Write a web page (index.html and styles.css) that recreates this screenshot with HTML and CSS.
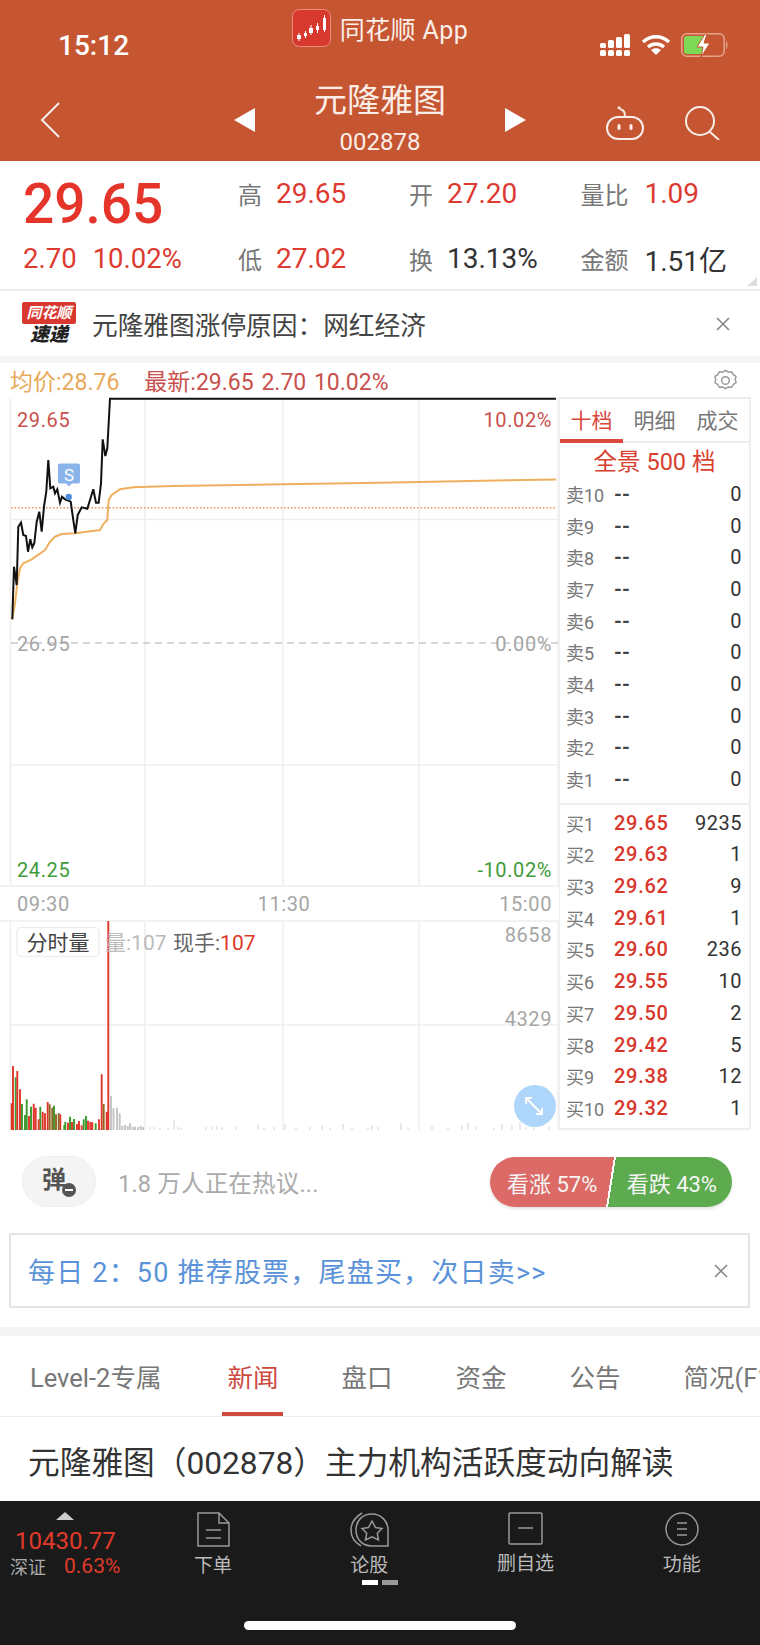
FILE: index.html
```html
<!DOCTYPE html>
<html lang="zh-CN">

<head>
    <meta charset="UTF-8">
    <meta name="viewport" content="width=device-width, initial-scale=1.0">
    <title>元隆雅图</title>
    <link rel="stylesheet" href="styles.css">
</head>

<body>
    <div class="page">
        <div class="content">
            <header class="header">
                <div class="status">
                    <div class="time">15:12</div>
                    <div class="notice">
                        <svg class="app-icon" width="39" height="38" viewBox="0 0 39 38">
                            <rect x="0.5" y="0.5" width="38" height="37" rx="7" fill="#d8392f" stroke="#e98d82" />
                            <path d="M5 26h4v4H5zM12 24h3v3h-3zM17 19h4v5h-4zM24 17h3v4h-3zM31 9h3v12h-3z" fill="#fff" />
                            <path d="M7 24v8M13.5 22v7M19 16v10M25.5 14v10M32.5 6v17" stroke="#fff" stroke-width="1" />
                        </svg>
                        <span>同花顺 App</span>
                    </div>
                    <div class="status-icons">
                        <svg width="31" height="24" viewBox="0 0 31 24" fill="#fff">
                            <rect x="0" y="10" width="6" height="5" rx="1.5" />
                            <rect x="0" y="17" width="6" height="6" rx="1.5" />
                            <rect x="8" y="7" width="6" height="8" rx="1.5" />
                            <rect x="8" y="17" width="6" height="6" rx="1.5" />
                            <rect x="16" y="4" width="6" height="11" rx="1.5" />
                            <rect x="16" y="17" width="6" height="6" rx="1.5" />
                            <rect x="24" y="1" width="6" height="14" rx="1.5" />
                            <rect x="24" y="17" width="6" height="6" rx="1.5" />
                        </svg>
                        <svg width="30" height="22" viewBox="0 0 30 22" fill="none" stroke="#fff" stroke-width="3.4">
                            <path d="M2 8c7.5-7 18.5-7 26 0" />
                            <path d="M7 13c4.5-4 11.5-4 16 0" />
                            <path d="M15 21l-5-5c3-2.5 7-2.5 10 0z" fill="#fff" stroke="none" />
                        </svg>
                        <svg width="48" height="24" viewBox="0 0 48 24">
                            <rect x="0.75" y="0.75" width="42.5" height="22.5" rx="5" fill="none" stroke="#e3a48e" stroke-width="1.5" />
                            <path d="M3 6a3 3 0 0 1 3-3h16v18H6a3 3 0 0 1-3-3z" fill="#7ed957" />
                            <path d="M45 8c2 1 2 7 0 8z" fill="#e3a48e" />
                            <path d="M24 1l-8 13h6l-2 10 9-14h-6l3-9z" fill="#fff" stroke="#c55631" stroke-width="1" />
                        </svg>
                    </div>
                </div>
                <div class="nav">
                    <svg class="back" width="20" height="36" viewBox="0 0 20 36" fill="none" stroke="#fbeee9" stroke-width="2">
                        <path d="M19 1L2 18l17 17" />
                    </svg>
                    <div class="nav-title">
                        <div class="tri tri-left"></div>
                        <div class="title">
                            <div class="name">元隆雅图</div>
                            <div class="code">002878</div>
                        </div>
                        <div class="tri tri-right"></div>
                    </div>
                    <div class="nav-icons">
                        <svg width="40" height="34" viewBox="0 0 40 34" fill="none" stroke="#fbeee9" stroke-width="2">
                            <rect x="2" y="11" width="36" height="22" rx="11" />
                            <path d="M20 11c0-5-1-7-5-8" />
                            <circle cx="14" cy="1.8" r="1.5" fill="#fbeee9" stroke="none" />
                            <rect x="12.5" y="18" width="3" height="6" rx="1.5" fill="#fbeee9" stroke="none" />
                            <rect x="24.5" y="18" width="3" height="6" rx="1.5" fill="#fbeee9" stroke="none" />
                        </svg>
                        <svg width="35" height="34" viewBox="0 0 35 34" fill="none" stroke="#fbeee9" stroke-width="2">
                            <circle cx="15" cy="15" r="14" />
                            <path d="M24 25l10 9" />
                        </svg>
                    </div>
                </div>
            </header>

            <section class="quote">
                <div class="quote-main">
                    <div class="price">29.65</div>
                    <div class="change"><span>2.70</span><span>10.02%</span></div>
                </div>
                <div class="stats">
                    <div class="stat"><span class="stat-label">高</span><span class="up">29.65</span></div>
                    <div class="stat"><span class="stat-label">开</span><span class="up">27.20</span></div>
                    <div class="stat"><span class="stat-label">量比</span><span class="up">1.09</span></div>
                    <div class="stat"><span class="stat-label">低</span><span class="up">27.02</span></div>
                    <div class="stat"><span class="stat-label">换</span><span class="dark">13.13%</span></div>
                    <div class="stat"><span class="stat-label">金额</span><span class="dark">1.51亿</span></div>
                </div>
                <div class="corner"></div>
            </section>

            <section class="flash">
                <div class="flash-logo">
                    <div class="flash-tag">同花顺</div>
                    <div class="flash-word">速递</div>
                </div>
                <div class="flash-text">元隆雅图涨停原因&#xFF1A;网红经济</div>
                <svg class="close" width="14" height="14" viewBox="0 0 14 14">
                    <path d="M1 1l12 12M13 1L1 13" />
                </svg>
            </section>

            <section class="market">
                <div class="legend">
                    <span class="avg">均价:28.76</span>
                    <span class="latest">最新:29.65 2.70 10.02%</span>
                    <svg class="gear" width="23" height="23" viewBox="0 0 24 24" fill="none" stroke="#999" stroke-width="1.5">
                        <path d="M12 1.5l3 1.8 3.4-.4 1.7 3 2.9 1.8-.8 3.3.8 3.3-2.9 1.8-1.7 3-3.4-.4-3 1.8-3-1.8-3.4.4-1.7-3-2.9-1.8.8-3.3-.8-3.3 2.9-1.8 1.7-3 3.4.4z" />
                        <circle cx="12" cy="12" r="4" />
                    </svg>
                </div>
                <div class="market-row">
                    <svg class="chart" width="559" height="733" viewBox="0 397 559 733">
                        <!-- 网格 -->
                        <path class="grid" d="M10.5 398V886M10.5 921V1130M145 398V886M145 921V1130M283 398V886M283 921V1130M419 398V886M419 921V1130M558 398V886M558 921V1130M11 519.5H558M11 765H558M0 886H558M0 921H558M11 1025H558" />
                        <path class="mid" d="M11 643H558" />
                        <path class="dots" d="M11 507.7H557" />

                        <!-- 分时线 -->
                        <polyline class="avg-line" points="12.3,619.3 15,603.3 17.3,583.3 20,568.3 23.3,563.3 31.7,559.3 45,550 50,541.7 55,536.7 61.7,534 75,533.3 100,530 103.3,524 107.3,520 108.7,500 111.7,495 120,489.3 133.3,487.3 173,486 283,484.3 380,482.7 556,479.5" />
                        <polyline class="price-line" points="12.3,619.3 14,566.7 16.7,585 18.3,526.7 21,522.7 23.3,535 26,536 28,551.7 30.3,539.3 32.3,547.3 34.3,543.3 36.7,521.7 39.3,511.7 41.7,531.7 44,506.7 46.3,491.7 48.3,460 50.3,488.3 53.3,486.7 55,493.3 57.3,489.3 60,502.7 62,496.7 65,499.3 68.3,500.7 70.7,501.7 73.3,520 75.3,533.3 77.7,515 81.7,507.3 87.3,508.7 93.3,489.3 96,502.7 98.7,502.7 101,483.3 102.7,439.3 105.3,456 107.3,448.3 110,398.7 556,398.7" />

                        <!-- S 标记 -->
                        <path class="s-mark" d="M60 463.5h18a2 2 0 0 1 2 2v16a2 2 0 0 1-2 2h-6l-3 3-3-3h-6a2 2 0 0 1-2-2v-16a2 2 0 0 1 2-2z" />
                        <text class="s-text" x="69" y="481">S</text>
                        <circle class="s-dot" cx="68.7" cy="497" r="3.2" />

                        <!-- 价格标签 -->
                        <text class="lbl red" x="17" y="427">29.65</text>
                        <text class="lbl red end" x="552" y="427">10.02%</text>
                        <text class="lbl gray" x="17" y="651">26.95</text>
                        <text class="lbl gray end" x="552" y="651">0.00%</text>
                        <text class="lbl green" x="17" y="877">24.25</text>
                        <text class="lbl green end" x="552" y="877">-10.02%</text>
                        <text class="lbl gray" x="17" y="911">09:30</text>
                        <text class="lbl gray mid-text" x="284" y="911">11:30</text>
                        <text class="lbl gray end" x="552" y="911">15:00</text>
                        <text class="lbl gray end" x="552" y="942">8658</text>
                        <text class="lbl gray end" x="552" y="1026">4329</text>

                        <!-- 成交量 -->
                        <path class="bar bar-gray" d="M111 1130V1096M113.5 1130V1108.3M117 1130V1107.7M119.7 1130V1113.3M122.3 1130V1125.7M125 1130V1125M127.7 1130V1126M130 1130V1123.3M132.7 1130V1126.7M135 1130V1126.7M138 1130V1127M140.7 1130V1125.7M143 1130V1127" />
                        <path class="bar-thin" d="M150 1130V1127M154 1130V1127M160 1130V1128M168 1130V1128M174 1130V1120.7M178 1130V1127M181 1130V1128M206 1130V1127M212 1130V1127M217 1130V1126M222 1130V1127M236 1130V1127M258 1130V1124.7M264 1130V1128M274 1130V1127M285 1130V1124M296 1130V1128M310 1130V1127M322 1130V1125M330 1130V1128M343 1130V1124M352 1130V1127M368 1130V1128M372 1130V1125M378 1130V1127M401 1130V1123M408 1130V1127M432 1130V1126M448 1130V1127M462 1130V1125M468 1130V1123M476 1130V1127M494 1130V1128M502 1130V1124M512 1130V1125M520 1130V1122M526 1130V1127M534 1130V1123M549 1130V1127" />
                        <path class="bar bar-green" d="M15.7 1130V1077.3M22 1130V1104M25 1130V1115M26.7 1130V1099.3M31 1130V1106.7M40.3 1130V1106.7M54 1130V1105.7M64.3 1130V1125M65.3 1130V1121.7M70 1130V1116.7M74 1130V1119M83.7 1130V1119.3M86 1130V1116M95.7 1130V1123.3" />
                        <path class="bar bar-red" d="M11.7 1130V1103.3M13 1130V1066M17.3 1130V1071M20 1130V1089.3M29 1130V1116M33.7 1130V1103.7M35.7 1130V1107.7M38.7 1130V1119.3M42.7 1130V1111.7M45 1130V1113.3M47.7 1130V1102M60.3 1130V1114.3M68 1130V1122.7M72 1130V1122M77 1130V1124M79 1130V1121M81.7 1130V1125.3M88 1130V1120.7M90.3 1130V1121.7M92.3 1130V1122.3M99 1130V1119.3M101.7 1130V1074.3M106.7 1130V1111.7M108.3 1130V921" />
                        <path class="bar bar-brown" d="M49.7 1130V1104.3M52.3 1130V1107.7M56 1130V1114.3M58.7 1130V1113.3M103.7 1130V1104" />

                        <!-- 分时量 -->
                        <rect class="vol-box" x="17" y="927.5" width="82" height="29" rx="4" />
                        <text class="vol-title" x="58" y="950">分时量</text>
                        <text class="lbl vol-light" x="105" y="950">量:107</text>
                        <text class="lbl vol-dark" x="173" y="950">现手:<tspan class="vol-red">107</tspan></text>

                        <!-- 放大 -->
                        <circle class="expand" cx="535" cy="1106" r="21" />
                        <path class="expand-arrow" d="M526 1098l16 16M526 1104v-6h6M542 1108v6h-6" />
                    </svg>

                    <aside class="book">
                        <div class="book-tabs">
                            <div class="book-tab active">十档</div>
                            <div class="book-tab">明细</div>
                            <div class="book-tab">成交</div>
                        </div>
                        <div class="book-banner">全景 500 档</div>
                        <ul class="book-list">
                            <li><span class="lv">卖10</span><span class="none">--</span><span class="qty">0</span></li>
                            <li><span class="lv">卖9</span><span class="none">--</span><span class="qty">0</span></li>
                            <li><span class="lv">卖8</span><span class="none">--</span><span class="qty">0</span></li>
                            <li><span class="lv">卖7</span><span class="none">--</span><span class="qty">0</span></li>
                            <li><span class="lv">卖6</span><span class="none">--</span><span class="qty">0</span></li>
                            <li><span class="lv">卖5</span><span class="none">--</span><span class="qty">0</span></li>
                            <li><span class="lv">卖4</span><span class="none">--</span><span class="qty">0</span></li>
                            <li><span class="lv">卖3</span><span class="none">--</span><span class="qty">0</span></li>
                            <li><span class="lv">卖2</span><span class="none">--</span><span class="qty">0</span></li>
                            <li><span class="lv">卖1</span><span class="none">--</span><span class="qty">0</span></li>
                        </ul>
                        <ul class="book-list buy">
                            <li><span class="lv">买1</span><span class="bid">29.65</span><span class="qty">9235</span></li>
                            <li><span class="lv">买2</span><span class="bid">29.63</span><span class="qty">1</span></li>
                            <li><span class="lv">买3</span><span class="bid">29.62</span><span class="qty">9</span></li>
                            <li><span class="lv">买4</span><span class="bid">29.61</span><span class="qty">1</span></li>
                            <li><span class="lv">买5</span><span class="bid">29.60</span><span class="qty">236</span></li>
                            <li><span class="lv">买6</span><span class="bid">29.55</span><span class="qty">10</span></li>
                            <li><span class="lv">买7</span><span class="bid">29.50</span><span class="qty">2</span></li>
                            <li><span class="lv">买8</span><span class="bid">29.42</span><span class="qty">5</span></li>
                            <li><span class="lv">买9</span><span class="bid">29.38</span><span class="qty">12</span></li>
                            <li><span class="lv">买10</span><span class="bid">29.32</span><span class="qty">1</span></li>
                        </ul>
                    </aside>
                </div>
            </section>

            <section class="vote-row">
                <div class="danmu">
                    <span>弹</span>
                    <i class="danmu-off"></i>
                </div>
                <div class="hot">1.8 万人正在热议...</div>
                <div class="vote">
                    <span>看涨 57%</span>
                    <span>看跌 43%</span>
                </div>
            </section>

            <section class="ad">
                <div class="ad-text">每日 2&#xFF1A;50 推荐股票&#xFF0C;尾盘买&#xFF0C;次日卖&gt;&gt;</div>
                <svg class="close" width="14" height="14" viewBox="0 0 14 14">
                    <path d="M1 1l12 12M13 1L1 13" />
                </svg>
            </section>

            <div class="band"></div>

            <nav class="tabs">
                <div class="tab tab-first">Level-2专属</div>
                <div class="tab active">新闻</div>
                <div class="tab">盘口</div>
                <div class="tab">资金</div>
                <div class="tab">公告</div>
                <div class="tab">简况(F10)</div>
            </nav>

            <article class="news">
                <h2 class="news-title">元隆雅图&#xFF08;002878&#xFF09;主力机构活跃度动向解读</h2>
                <div class="news-meta"><span>同花顺问财分析</span><span>解读</span></div>
            </article>
        </div>

        <footer class="bar-bottom">
            <div class="bar-row">
                <div class="index">
                    <div class="index-up"></div>
                    <div class="index-num">10430.77</div>
                    <div class="index-sub"><span>深证</span><span class="index-pct">0.63%</span></div>
                </div>
                <div class="tool">
                    <svg width="33" height="35" viewBox="0 0 33 35" fill="none" stroke="#999" stroke-width="1.5">
                        <path d="M1 1h21l10 10v23H1zM22 1v10h10" />
                        <path d="M9 18h15M9 26h15" />
                    </svg>
                    <span>下单</span>
                </div>
                <div class="tool">
                    <svg width="39" height="35" viewBox="0 0 39 35" fill="none" stroke="#999" stroke-width="1.5">
                        <path d="M12 1C4 6 1 11 1 18c0 7 3 12 10 16" />
                        <path d="M38 34H22C12 34 6 27 6 18 6 9 12 2 22 2c9 0 16 7 16 16z" />
                        <path d="M22 9l3.5 6.5 6.5 1-4.7 4.8 1.2 6.7-6.5-3.2-6.5 3.2 1.2-6.7-4.7-4.8 6.5-1z" />
                    </svg>
                    <span>论股</span>
                </div>
                <div class="tool">
                    <svg width="35" height="33" viewBox="0 0 35 33" fill="none" stroke="#999" stroke-width="1.5">
                        <rect x="1" y="1" width="33" height="31" rx="1" />
                        <path d="M10 16h15" />
                    </svg>
                    <span>删自选</span>
                </div>
                <div class="tool">
                    <svg width="34" height="34" viewBox="0 0 34 34" fill="none" stroke="#999" stroke-width="1.5">
                        <circle cx="17" cy="17" r="16" />
                        <path d="M12 11h10M12 17h10M12 23h10" />
                    </svg>
                    <span>功能</span>
                </div>
            </div>
            <div class="pager"><i class="on"></i><i></i></div>
            <div class="home"></div>
        </footer>
    </div>
</body>

</html>
```

FILE: styles.css
```css
* {
    margin: 0;
    padding: 0;
    box-sizing: border-box;
    list-style-type: none;
}

html,
body {
    width: 760px;
    height: 1645px;
    overflow: hidden;
    background: #fff;
}

body {
    font-family: Roboto, "Noto Sans CJK SC", sans-serif;
    color: #333;
}

svg {
    display: block;
    flex: none;
}

.page {
    height: 1645px;
    display: flex;
    flex-direction: column;
}

.content {
    flex: 1;
    min-height: 0;
    overflow: hidden;
}

/* 顶部 */
.header {
    height: 161px;
    background: #c55631;
    color: #fbeee9;
}

.status {
    height: 78px;
    display: grid;
    grid-template-columns: 1fr auto 1fr;
    align-items: start;
}

.time {
    margin: 27px 0 0 58px;
    font-size: 28px;
    line-height: 38px;
    font-weight: 500;
    color: #fff;
}

.notice {
    margin-top: 9px;
    display: flex;
    align-items: center;
    gap: 9px;
    font-size: 25px;
    letter-spacing: .4px;
}

.status-icons {
    margin-top: 33px;
    display: flex;
    justify-content: flex-end;
    align-items: center;
    gap: 10px;
    padding-right: 31px;
}

.nav {
    height: 83px;
    display: grid;
    grid-template-columns: 1fr auto 1fr;
    align-items: center;
}

.back {
    margin: 1px 0 0 40px;
}

.nav-title {
    display: flex;
    align-items: center;
    gap: 59px;
}

.tri {
    width: 0;
    height: 0;
    border-top: 12px solid transparent;
    border-bottom: 12px solid transparent;
}

.tri-left {
    border-right: 21px solid #fff;
}

.tri-right {
    border-left: 21px solid #fff;
}

.title {
    text-align: center;
}

.name {
    font-size: 33px;
    line-height: 42px;
}

.code {
    font-size: 24px;
    line-height: 34px;
    margin-top: 3px;
}

.nav-icons {
    display: flex;
    justify-content: flex-end;
    align-items: center;
    gap: 40px;
    padding: 7px 40px 0 0;
}

/* 行情 */
.quote {
    position: relative;
    height: 130px;
    display: flex;
    border-bottom: 2px solid #eee;
}

.quote-main {
    width: 238px;
    padding-left: 23px;
}

.price {
    font-size: 55px;
    line-height: 66px;
    margin-top: 10px;
    font-weight: 500;
    color: #e5352b;
}

.change {
    display: flex;
    gap: 16px;
    margin-top: 6px;
    font-size: 27.5px;
    line-height: 32px;
    color: #dd3a30;
}

.stats {
    flex: 1;
    display: grid;
    grid-template-columns: 171px 171.5px 1fr;
    grid-auto-rows: 65px;
}

.stat {
    display: flex;
    align-items: center;
    gap: 14px;
    font-size: 28px;
}

.stat:nth-child(3n) {
    gap: 16px;
}

.stat-label {
    font-size: 24px;
    color: #777;
}

.up {
    color: #dd3a30;
}

.dark {
    color: #333;
}

.corner {
    position: absolute;
    right: 3px;
    bottom: 3px;
    width: 0;
    height: 0;
    border-left: 10px solid transparent;
    border-bottom: 9px solid #ddd;
}

.flash {
    height: 65px;
    display: flex;
    align-items: center;
    padding: 0 30px 0 22px;
    background: #fff;
}

.flash-logo {
    width: 54px;
    margin-right: 16px;
    text-align: center;
}

.flash-tag {
    height: 22px;
    background: #d8382f;
    color: #fff;
    font-size: 15px;
    line-height: 22px;
    font-weight: 700;
    font-style: italic;
    border-radius: 2px;
}

.flash-word {
    font-size: 19px;
    line-height: 22px;
    font-weight: 900;
    font-style: italic;
    color: #222;
}

.flash-text {
    flex: 1;
    font-size: 25.7px;
    color: #444;
}

.close path {
    fill: none;
    stroke: #888;
    stroke-width: 1.6;
}

/* 分时 */
.market {
    border-top: 7px solid #f4f4f4;
}

.legend {
    height: 34px;
    display: flex;
    align-items: center;
    gap: 25px;
    padding-left: 10px;
    font-size: 23px;
}

.avg {
    color: #e8a95a;
}

.latest {
    color: #c9504c;
    word-spacing: 2px;
}

.gear {
    margin-left: auto;
    margin-right: 23px;
}

.market-row {
    height: 733px;
    display: flex;
}

.grid {
    fill: none;
    stroke: #eeeeee;
    stroke-width: 1.5;
}

.mid {
    fill: none;
    stroke: #c8c8c8;
    stroke-width: 1.5;
    stroke-dasharray: 7 5;
}

.dots {
    fill: none;
    stroke: #e8925a;
    stroke-width: 1.5;
    stroke-dasharray: 1.5 2;
}

.avg-line {
    fill: none;
    stroke: #eeb05f;
    stroke-width: 2;
}

.price-line {
    fill: none;
    stroke: #111;
    stroke-width: 2;
}

.s-mark {
    fill: #8ab3ea;
}

.s-text {
    fill: #fff;
    font-size: 17px;
    text-anchor: middle;
}

.s-dot {
    fill: #4f8bd9;
}

.lbl {
    font-size: 20px;
    letter-spacing: .6px;
}

.red {
    fill: #c9504c;
}

.gray {
    fill: #a6a6a6;
}

.green {
    fill: #3f9a3a;
}

.end {
    text-anchor: end;
}

.mid-text {
    text-anchor: middle;
}

.bar {
    fill: none;
    stroke-width: 1.9;
}

.bar-red {
    stroke: #e0362a;
}

.bar-green {
    stroke: #3c9a2e;
}

.bar-brown {
    stroke: #8f6424;
}

.bar-gray {
    stroke: #c4c4c4;
}

.bar-thin {
    fill: none;
    stroke: #d4d4d4;
    stroke-width: 1;
}

.vol-box {
    fill: #fff;
    stroke: #eeeeee;
    stroke-width: 1.5;
}

.vol-title {
    fill: #444;
    font-size: 21px;
    text-anchor: middle;
}

.vol-light {
    fill: #bbb;
    font-size: 21px;
    letter-spacing: 0;
}

.vol-dark {
    fill: #666;
    font-size: 21px;
    letter-spacing: 0;
}

.vol-red {
    fill: #e0362a;
}

.expand {
    fill: #aed6fa;
}

.expand-arrow {
    fill: none;
    stroke: #fff;
    stroke-width: 1.8;
}

/* 盘口 */
.book {
    width: 192px;
    height: 733px;
    border: 2px solid #eeeeee;
    border-left-width: 1px;
}

.book-tabs {
    height: 44px;
    display: flex;
    border-bottom: 2px solid #eeeeee;
}

.book-tab {
    flex: 1;
    text-align: center;
    font-size: 21px;
    line-height: 44px;
    color: #777;
}

.book-tab.active {
    color: #d9483c;
    border-bottom: 4px solid #d9483c;
    height: 44px;
}

.book-banner {
    height: 35px;
    text-align: center;
    font-size: 23.5px;
    line-height: 38px;
    color: #d9402f;
}

.book-list {
    padding-bottom: 8px;
}

.book-list.buy {
    padding: 2px 0 0;
    border-top: 2px solid #eeeeee;
}

.book-list li {
    height: 31.7px;
    display: grid;
    grid-template-columns: 48px 1fr auto;
    align-items: center;
    padding: 0 7px 0 6px;
}

.lv {
    font-size: 18px;
    color: #777;
    white-space: nowrap;
}

.none {
    font-size: 20px;
    font-weight: 700;
    color: #444;
}

.bid {
    font-size: 20px;
    letter-spacing: .7px;
    font-weight: 500;
    color: #d9362b;
}

.qty {
    font-size: 20px;
    letter-spacing: .5px;
    color: #333;
}

/* 投票 */
.vote-row {
    height: 103px;
    display: flex;
    align-items: center;
    padding: 0 28px 0 22px;
}

.danmu {
    position: relative;
    width: 74px;
    height: 51px;
    border: 1px solid #eee;
    border-radius: 26px;
    background: #f4f4f4;
    font-size: 24px;
    font-weight: 700;
    color: #555;
    line-height: 47px;
    padding-left: 19px;
}

.danmu-off {
    position: absolute;
    left: 39px;
    top: 26px;
    width: 14px;
    height: 14px;
    border-radius: 50%;
    background: #555;
}

.danmu-off::after {
    content: "";
    position: absolute;
    left: 3px;
    top: 6px;
    width: 8px;
    height: 2px;
    background: #fff;
}

.hot {
    flex: 1;
    margin-left: 22px;
    font-size: 23.5px;
    letter-spacing: .2px;
    color: #aaa;
}

.vote {
    width: 242px;
    height: 50px;
    display: flex;
    justify-content: space-between;
    align-items: center;
    padding: 0 15px 0 17px;
    border-radius: 25px;
    font-size: 22px;
    color: #f6f6f6;
    background: linear-gradient(99deg, #dc6a67 calc(50% - 1px), #fff calc(50% - 1px), #fff calc(50% + 1px), #5dab4e calc(50% + 1px));
    box-shadow: 0 2px 3px rgba(120, 120, 120, .2);
}

.ad {
    height: 75px;
    margin: 0 10px 0 9px;
    display: flex;
    align-items: center;
    justify-content: space-between;
    padding: 0 20px 0 17px;
    border: 2px solid #e4e4e4;
}

.ad-text {
    font-size: 27px;
    letter-spacing: 1.2px;
    color: #5b93d9;
}

/* 新闻 */
.band {
    height: 9px;
    margin-top: 19px;
    background: #f4f4f4;
}

.tabs {
    height: 81px;
    display: flex;
    align-items: stretch;
    padding-left: 30px;
    white-space: nowrap;
    border-bottom: 1px solid #eee;
    overflow: hidden;
}

.tab {
    position: relative;
    flex: none;
    margin-right: 63px;
    font-size: 25.5px;
    line-height: 84px;
    color: #777;
}

.tab-first {
    margin-right: 66px;
}

.tab.active {
    color: #cc4a3f;
}

.tab.active::after {
    content: "";
    position: absolute;
    left: -5px;
    right: -5px;
    bottom: 0;
    height: 4px;
    background: #cc4a3f;
}

.news {
    padding: 0 30px 0 28px;
}

.news-title {
    margin-top: 26px;
    font-size: 31.7px;
    line-height: 42px;
    font-weight: 400;
    color: #333;
    white-space: nowrap;
}

.news-meta {
    display: flex;
    justify-content: space-between;
    margin-top: 11px;
    font-size: 22px;
    color: #bbb;
}

/* 底栏 */
.bar-bottom {
    height: 144px;
    background: #1a1a1a;
}

.bar-row {
    height: 78px;
    display: flex;
    padding-top: 11px;
}

.index {
    width: 135px;
    padding-left: 10px;
}

.index-up {
    width: 0;
    height: 0;
    margin-left: 46px;
    border-left: 9px solid transparent;
    border-right: 9px solid transparent;
    border-bottom: 8px solid #ccc;
}

.index-num {
    margin: 6px 0 0 5px;
    font-size: 24px;
    line-height: 30px;
    color: #e03a2a;
}

.index-sub {
    display: flex;
    align-items: center;
    gap: 18px;
    margin-top: -3px;
    font-size: 18px;
    color: #aaa;
}

.index-pct {
    font-size: 21px;
    color: #e03a2a;
}

.tool {
    flex: 1;
    display: flex;
    flex-direction: column;
    align-items: center;
    gap: 3px;
    font-size: 19px;
    color: #bbb;
}

.pager {
    display: flex;
    justify-content: center;
    gap: 4px;
    padding-right: 1px;
    margin-top: 1px;
}

.pager i {
    width: 16px;
    height: 5px;
    background: #999;
}

.pager i.on {
    background: #fff;
}

.home {
    width: 272px;
    height: 9px;
    margin: 36px auto 0;
    border-radius: 5px;
    background: #fff;
}
```
